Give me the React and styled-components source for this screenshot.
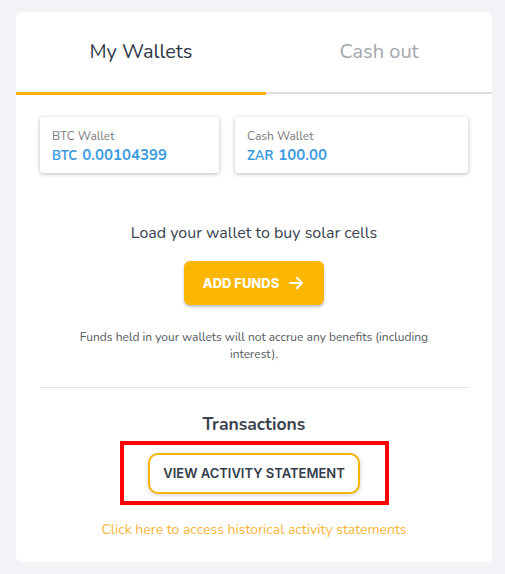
import React from "react"
import styled, { createGlobalStyle } from 'styled-components'

const GlobalStyle = createGlobalStyle`
  body {
    margin: 0;
    background: #f2f3f7;
    font-family: "Nunito", Lato, "Noto Sans", sans-serif;
  }
`

const Page = styled.div`
  padding: 12px 13px 11px 16px;
`

const Card = styled.div`
  background: #fff;
  border-radius: 5px;
  overflow: hidden;
  padding-bottom: 23px;
`

const Tabs = styled.div`
  display: grid;
  grid-template-columns: 250px 1fr;
`

const Tab = styled.div`
  height: 78px;
  display: flex;
  align-items: center;
  justify-content: center;
  font-size: 20px;
  color: ${props => props.active ? '#2e3848' : '#a3a7ae'};
  border-bottom: ${props => props.active ? '3px solid #f9b300' : '2px solid #dedede'};
  margin-bottom: ${props => props.active ? '0' : '1px'};
  padding-bottom: 2px;
`

const Body = styled.div`
  padding: 22px 24px 0;
  display: flex;
  flex-direction: column;
  align-items: center;
`

const Wallets = styled.div`
  align-self: stretch;
  display: grid;
  grid-template-columns: 179px 233px;
  gap: 16px;
`

const WalletCard = styled.div`
  height: 56px;
  box-sizing: border-box;
  padding: 11px 12px 0;
  background: #fff;
  border-radius: 3px;
  box-shadow: 0 1px 4px rgba(0, 0, 0, 0.28);
`

const WalletLabel = styled.div`
  font-size: 12px;
  color: #7a7a7a;
  line-height: 16px;
`

const WalletValue = styled.div`
  color: #3d9be2;
  font-weight: 700;
  margin-top: 1px;
  display: flex;
  align-items: baseline;
  gap: 5px;
  font-size: 15px;
`

const Currency = styled.span`
  font-size: 13px;
`

const Prompt = styled.div`
  margin-top: 49px;
  font-size: 16px;
  color: #3b4250;
`

const AddButton = styled.button`
  margin-top: 17px;
  width: 140px;
  height: 44px;
  border: none;
  border-radius: 6px;
  background: #fbb600;
  color: #fff;
  font-family: Inter, "Noto Sans", sans-serif;
  font-weight: 800;
  font-size: 13px;
  display: flex;
  align-items: center;
  justify-content: center;
  gap: 8px;
  box-shadow: 0 2px 3px rgba(0, 0, 0, 0.25);
`

const Note = styled.p`
  margin: 24px 0 0;
  width: 370px;
  text-align: center;
  font-size: 12px;
  line-height: 17px;
  color: #555a60;
`

const Divider = styled.hr`
  align-self: stretch;
  border: none;
  border-top: 1px solid #e2e2e2;
  margin: 24px 0 0;
`

const Heading = styled.div`
  margin-top: 24px;
  font-size: 17.5px;
  font-weight: 700;
  color: #3b4250;
`

const Highlight = styled.div`
  margin-top: 5px;
  width: 269px;
  height: 64px;
  box-sizing: border-box;
  border: 4px solid #ff0000;
  display: flex;
  align-items: center;
  justify-content: center;
`

const StatementButton = styled.button`
  width: 212px;
  height: 41px;
  border: 2px solid #f7b500;
  border-radius: 10px;
  background: #fff;
  color: #333c4a;
  font-family: Inter, "Noto Sans", sans-serif;
  font-weight: 600;
  font-size: 13px;
  box-shadow: 0 1px 4px rgba(0, 0, 0, 0.2);
`

const HistoryLink = styled.a`
  margin-top: 15px;
  font-size: 14px;
  color: #f9b53a;
  text-decoration: none;
`

const Arrow = () => (
  <svg width="18" height="18" viewBox="0 0 24 24" fill="none" stroke="#fff" strokeWidth="2.6" strokeLinecap="round" strokeLinejoin="round">
    <path d="M4 12h16M13 5l7 7-7 7" />
  </svg>
)

export default function App() {
  return (
    <Page>
      <GlobalStyle />
      <Card>
        <Tabs>
          <Tab active>My Wallets</Tab>
          <Tab>Cash out</Tab>
        </Tabs>
        <Body>
          <Wallets>
            <WalletCard>
              <WalletLabel>BTC Wallet</WalletLabel>
              <WalletValue><Currency>BTC</Currency>0.00104399</WalletValue>
            </WalletCard>
            <WalletCard>
              <WalletLabel>Cash Wallet</WalletLabel>
              <WalletValue><Currency>ZAR</Currency>100.00</WalletValue>
            </WalletCard>
          </Wallets>
          <Prompt>Load your wallet to buy solar cells</Prompt>
          <AddButton>ADD FUNDS <Arrow /></AddButton>
          <Note>Funds held in your wallets will not accrue any benefits (including interest).</Note>
          <Divider />
          <Heading>Transactions</Heading>
          <Highlight>
            <StatementButton>VIEW ACTIVITY STATEMENT</StatementButton>
          </Highlight>
          <HistoryLink href="#">Click here to access historical activity statements</HistoryLink>
        </Body>
      </Card>
    </Page>
  )
}
